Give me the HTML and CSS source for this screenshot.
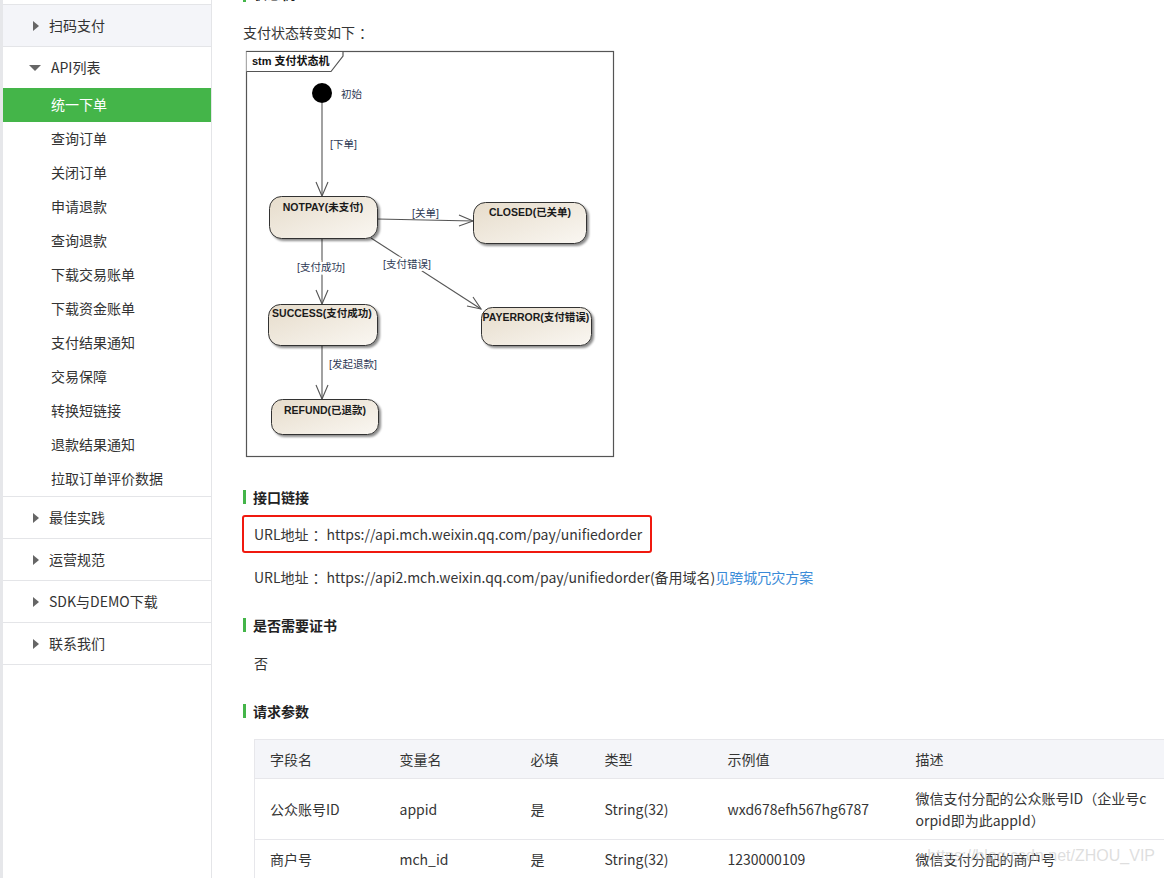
FILE: index.html
```html
<!DOCTYPE html>
<html lang="zh-CN">
<head>
<meta charset="utf-8">
<title>统一下单</title>
<link rel="stylesheet" href="styles.css">
</head>
<body>
<div class="page">
  <aside class="sidebar">
    <div class="nav-top"></div>
    <div class="nav-group collapsed"><span class="tri-right"></span><span class="nav-label">扫码支付</span></div>
    <div class="nav-group open">
      <div class="nav-head"><span class="tri-down"></span><span class="nav-label">API列表</span></div>
      <ul class="nav-sub">
        <li class="active">统一下单</li>
        <li>查询订单</li>
        <li>关闭订单</li>
        <li>申请退款</li>
        <li>查询退款</li>
        <li>下载交易账单</li>
        <li>下载资金账单</li>
        <li>支付结果通知</li>
        <li>交易保障</li>
        <li>转换短链接</li>
        <li>退款结果通知</li>
        <li>拉取订单评价数据</li>
      </ul>
    </div>
    <div class="nav-group plain"><span class="tri-right"></span><span class="nav-label">最佳实践</span></div>
    <div class="nav-group plain"><span class="tri-right"></span><span class="nav-label">运营规范</span></div>
    <div class="nav-group plain"><span class="tri-right"></span><span class="nav-label">SDK与DEMO下载</span></div>
    <div class="nav-group plain"><span class="tri-right"></span><span class="nav-label">联系我们</span></div>
  </aside>

  <main class="content">
    <h3 class="sec-title first">状态机</h3>
    <p class="para intro">支付状态转变如下<span class="colon">：</span></p>
    <div class="diagram">
      <svg width="372" height="408" viewBox="0 0 372 408" xmlns="http://www.w3.org/2000/svg">
        <defs>
          <linearGradient id="boxfill" x1="0" y1="0" x2="1" y2="1">
            <stop offset="0" stop-color="#e6dccb"/>
            <stop offset="1" stop-color="#faf7f2"/>
          </linearGradient>
          <filter id="shadow" x="-10%" y="-10%" width="130%" height="140%">
            <feDropShadow dx="2" dy="2" stdDeviation="1" flood-color="#000" flood-opacity="0.45"/>
          </filter>
        </defs>
        <rect x="0" y="0" width="372" height="408" fill="#fff"/>
        <rect x="3.5" y="1.5" width="367" height="405" fill="#fff" stroke="#555" stroke-width="1.2"/>
        <path d="M3.5 1.5 H100 V6 L88 21.5 H3.5" fill="#fff" stroke="#555" stroke-width="1.2"/>
        <text x="9" y="15" class="d-tab">stm 支付状态机</text>

        <circle cx="79" cy="43" r="10" fill="#000"/>
        <text x="98" y="48" class="d-lbl">初始</text>

        <g stroke="#555" stroke-width="1.1" fill="none">
          <line x1="79" y1="53" x2="79" y2="146"/>
          <polyline points="73,132 79,146 85,132"/>
          <line x1="134" y1="169" x2="230" y2="171"/>
          <polyline points="216,165 230,171 216,176"/>
          <line x1="128" y1="188" x2="238" y2="259"/>
          <polyline points="224,256 238,259 230,247"/>
          <line x1="79" y1="188" x2="79" y2="254"/>
          <polyline points="73,240 79,254 85,240"/>
          <line x1="79" y1="295" x2="79" y2="349"/>
          <polyline points="73,335 79,349 85,335"/>
        </g>

        <text x="87" y="98" class="d-lbl">[下单]</text>
        <text x="169" y="167" class="d-lbl">[关单]</text>
        <text x="140" y="218" class="d-lbl bg">[支付错误]</text>
        <text x="78" y="221" class="d-lbl bg" text-anchor="middle">[支付成功]</text>
        <text x="86" y="318" class="d-lbl">[发起退款]</text>

        <g filter="url(#shadow)" stroke="#333" stroke-width="1" fill="url(#boxfill)">
          <rect x="26.5" y="146.5" width="108" height="42" rx="12"/>
          <rect x="230.5" y="152.5" width="113" height="41" rx="12"/>
          <rect x="238.5" y="257.5" width="110" height="38" rx="11"/>
          <rect x="25.5" y="254.5" width="109" height="41" rx="12"/>
          <rect x="28.5" y="349.5" width="107" height="35" rx="11"/>
        </g>
        <text x="80" y="161" class="d-box" text-anchor="middle">NOTPAY(未支付)</text>
        <text x="287" y="166" class="d-box" text-anchor="middle">CLOSED(已关单)</text>
        <text x="293" y="271" class="d-box" text-anchor="middle">PAYERROR(支付错误)</text>
        <text x="79" y="267" class="d-box" text-anchor="middle">SUCCESS(支付成功)</text>
        <text x="82" y="364" class="d-box" text-anchor="middle">REFUND(已退款)</text>
      </svg>
    </div>

    <h3 class="sec-title">接口链接</h3>
    <div class="url-box">URL地址<span class="colon">：</span>https://api.mch.weixin.qq.com/pay/unifiedorder</div>
    <p class="para indent url2">URL地址<span class="colon">：</span>https://api2.mch.weixin.qq.com/pay/unifiedorder(备用域名)<a class="link" href="#">见跨城冗灾方案</a></p>

    <h3 class="sec-title gap">是否需要证书</h3>
    <p class="para indent no">否</p>

    <h3 class="sec-title gap">请求参数</h3>
    <table class="params">
      <colgroup>
        <col class="c1"><col class="c2"><col class="c3"><col class="c4"><col class="c5"><col class="c6">
      </colgroup>
      <thead>
        <tr><th>字段名</th><th>变量名</th><th>必填</th><th>类型</th><th>示例值</th><th>描述</th></tr>
      </thead>
      <tbody>
        <tr><td>公众账号ID</td><td>appid</td><td>是</td><td>String(32)</td><td>wxd678efh567hg6787</td><td class="desc">微信支付分配的公众账号ID（企业号corpid即为此appId）</td></tr>
        <tr><td>商户号</td><td>mch_id</td><td>是</td><td>String(32)</td><td>1230000109</td><td class="desc">微信支付分配的商户号</td></tr>
      </tbody>
    </table>
  </main>
</div>
<div class="watermark">https://blog.csdn.net/ZHOU_VIP</div>
</body>
</html>
```

FILE: styles.css
```css
html, body {
  margin: 0;
  padding: 0;
  height: 100%;
  overflow: hidden;
  background: #fff;
}
body {
  font-family: "Microsoft YaHei", "Noto Sans CJK SC", "Liberation Sans", sans-serif;
  font-size: 14px;
  color: #353535;
}
.colon {
  padding-left: 4px;
}
.page {
  display: flex;
  height: 878px;
  border-left: 3px solid #e6e7ea;
}
.sidebar {
  width: 208px;
  flex: none;
  border-right: 1px solid #e4e5e8;
  background: #fff;
}
.nav-top {
  height: 4px;
  border-bottom: 1px solid #e4e5e8;
}
.nav-group.collapsed,
.nav-group.plain {
  height: 41px;
  display: flex;
  align-items: center;
  border-bottom: 1px solid #e4e5e8;
  color: #333;
}
.nav-label {
  position: relative;
  top: -1px;
}
.nav-group.collapsed {
  background: #f4f5f9;
}
.tri-right {
  width: 0;
  height: 0;
  border-top: 5.5px solid transparent;
  border-bottom: 5.5px solid transparent;
  border-left: 6px solid #666;
  margin-left: 30px;
  margin-right: 10px;
}
.tri-down {
  width: 0;
  height: 0;
  border-left: 6px solid transparent;
  border-right: 6px solid transparent;
  border-top: 6px solid #666;
  margin-left: 26px;
  margin-right: 10px;
}
.nav-group.open {
  border-bottom: 1px solid #e4e5e8;
}
.nav-head {
  height: 41px;
  display: flex;
  align-items: center;
  color: #333;
}
.nav-sub {
  list-style: none;
  margin: 0;
  padding: 0;
}
.nav-sub li {
  height: 34px;
  line-height: 32px;
  padding-left: 48px;
  color: #333;
}
.nav-sub li.active {
  background: #44b549;
  color: #fff;
}

.content {
  flex: 1;
  padding-left: 31px;
  min-width: 0;
}
.sec-title {
  margin: 28px 0 0 0;
  height: 22px;
  line-height: 22px;
  font-size: 14px;
  font-weight: bold;
  color: #222;
  padding-left: 10px;
  position: relative;
}
.sec-title::before {
  content: "";
  position: absolute;
  left: 0;
  top: 4px;
  width: 3px;
  height: 14px;
  background: #44b549;
}
.sec-title.first {
  margin-top: -18px;
}
.sec-title.first::before {
  top: 6px;
}
.sec-title.gap {
  margin-top: 26px;
}
.para {
  margin: 0;
  line-height: 22px;
}
.intro {
  margin-top: 17px;
}
.diagram {
  margin-top: 7px;
  height: 408px;
}
.diagram svg {
  display: block;
}
.d-tab {
  font-family: "Liberation Sans", "Noto Sans CJK SC", sans-serif;
  font-size: 11px;
  font-weight: bold;
  fill: #111;
}
.d-lbl {
  font-family: "Liberation Sans", "Noto Sans CJK SC", sans-serif;
  font-size: 10.5px;
  fill: #2e3a55;
}
.d-lbl.bg {
  stroke: #fff;
  stroke-width: 4px;
  paint-order: stroke;
}
.d-box {
  font-family: "Liberation Sans", "Noto Sans CJK SC", sans-serif;
  font-size: 10.5px;
  font-weight: bold;
  fill: #1a1a1a;
}
.url-box {
  margin: 7px 0 0 -1px;
  width: 410px;
  height: 38px;
  box-sizing: border-box;
  border: 2px solid #f0190f;
  border-radius: 3px;
  padding-left: 10px;
  line-height: 34px;
  white-space: nowrap;
}
.indent {
  padding-left: 11px;
}
.url2 {
  margin-top: 13px;
}
.link {
  color: #3a8bd8;
  text-decoration: none;
}
.no {
  margin-top: 16px;
}
.params {
  margin: 17px 0 0 11px;
  border-collapse: collapse;
  table-layout: fixed;
  width: 911px;
  font-size: 14px;
  color: #353535;
}
.params col.c1 { width: 130px; }
.params col.c2 { width: 131px; }
.params col.c3 { width: 74px; }
.params col.c4 { width: 123px; }
.params col.c5 { width: 188px; }
.params col.c6 { width: 265px; }
.params th,
.params td {
  border-top: 1px solid #e7e7eb;
  border-bottom: 1px solid #e7e7eb;
  padding: 8px 12px 8px 15px;
  line-height: 22px;
  text-align: left;
  font-weight: normal;
  vertical-align: middle;
}
.params th:first-child,
.params td:first-child {
  border-left: 1px solid #e7e7eb;
}
.params thead th {
  background: #f4f5f9;
}
.params td.desc {
  word-break: break-all;
  padding-right: 18px;
}
.watermark {
  position: absolute;
  right: 9px;
  top: 847px;
  font-family: "Liberation Sans", sans-serif;
  font-size: 16px;
  color: rgba(190, 190, 190, 0.5);
  pointer-events: none;
}
```
